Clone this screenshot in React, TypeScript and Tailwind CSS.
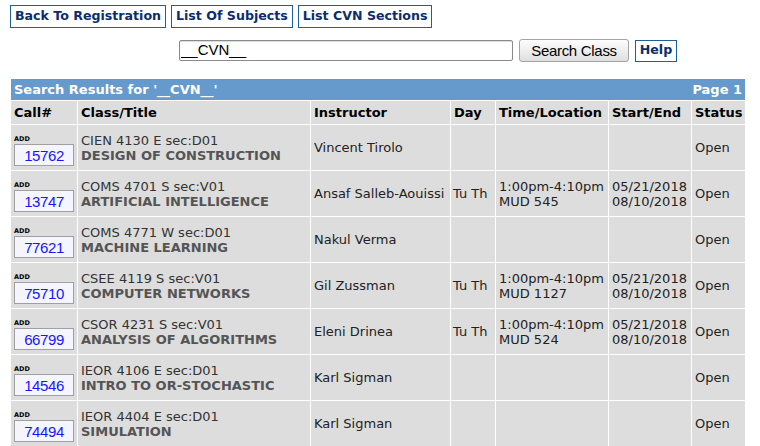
import React from "react"

type Row = {
  call: string
  course: string
  title: string
  instructor: string
  day?: string
  time?: string
  room?: string
  start?: string
  end?: string
  status: string
}

const rows: Row[] = [
  { call: "15762", course: "CIEN 4130 E sec:D01", title: "DESIGN OF CONSTRUCTION", instructor: "Vincent Tirolo", status: "Open" },
  { call: "13747", course: "COMS 4701 S sec:V01", title: "ARTIFICIAL INTELLIGENCE", instructor: "Ansaf Salleb-Aouissi", day: "Tu Th", time: "1:00pm-4:10pm", room: "MUD 545", start: "05/21/2018", end: "08/10/2018", status: "Open" },
  { call: "77621", course: "COMS 4771 W sec:D01", title: "MACHINE LEARNING", instructor: "Nakul Verma", status: "Open" },
  { call: "75710", course: "CSEE 4119 S sec:V01", title: "COMPUTER NETWORKS", instructor: "Gil Zussman", day: "Tu Th", time: "1:00pm-4:10pm", room: "MUD 1127", start: "05/21/2018", end: "08/10/2018", status: "Open" },
  { call: "66799", course: "CSOR 4231 S sec:V01", title: "ANALYSIS OF ALGORITHMS", instructor: "Eleni Drinea", day: "Tu Th", time: "1:00pm-4:10pm", room: "MUD 524", start: "05/21/2018", end: "08/10/2018", status: "Open" },
  { call: "14546", course: "IEOR 4106 E sec:D01", title: "INTRO TO OR-STOCHASTIC", instructor: "Karl Sigman", status: "Open" },
  { call: "74494", course: "IEOR 4404 E sec:D01", title: "SIMULATION", instructor: "Karl Sigman", status: "Open" },
]

function NavBox({ children }: { children: React.ReactNode }) {
  return (
    <a href="#" className="flex h-[23px] items-center border border-[#1d6197] px-[4px] text-[12.6px] font-bold text-[#0c2d6b]">
      {children}
    </a>
  )
}

export default function App() {
  return (
    <div className="min-h-[446px] bg-white font-['DejaVu_Sans',sans-serif] text-[13px] text-[#222]">
      <div className="flex gap-[5px] pl-[10px] pt-[5px]">
        <NavBox>Back To Registration</NavBox>
        <NavBox>List Of Subjects</NavBox>
        <NavBox>List CVN Sections</NavBox>
      </div>

      <div className="mt-[11px] flex h-[23px] items-center gap-[6px] pl-[179px]">
        <input
          defaultValue="__CVN__"
          className="h-[21px] w-[334px] rounded-[2px] border border-[#8a8a8a] bg-white pl-[1px] font-['Liberation_Sans',sans-serif] text-[15px] text-black shadow-[inset_0_1px_1px_rgba(0,0,0,0.15)] outline-none"
        />
        <button className="h-[23px] w-[110px] rounded-[3px] border border-[#a3a3a3] bg-gradient-to-b from-[#fdfdfd] to-[#dfdfdf] font-['Liberation_Sans',sans-serif] text-[15px] tracking-[-0.3px] text-black">
          Search Class
        </button>
        <a href="#" className="flex h-[22px] w-[42px] items-center justify-center border border-[#1d6197] text-[12.6px] font-bold text-[#0c2d6b]">
          Help
        </a>
      </div>

      <table className="ml-[10px] mt-[16px] w-[736px] table-fixed border-separate border-spacing-[1px]">
        <colgroup>
          <col className="w-[66px]" />
          <col className="w-[232px]" />
          <col className="w-[139px]" />
          <col className="w-[44px]" />
          <col className="w-[112px]" />
          <col className="w-[82px]" />
          <col className="w-[53px]" />
        </colgroup>
        <thead>
          <tr className="h-[21px] bg-[#6699cc] font-bold text-white">
            <td colSpan={7} className="px-[3px]">
              <div className="flex justify-between">
                <span>Search Results for '__CVN__'</span>
                <span>Page 1</span>
              </div>
            </td>
          </tr>
          <tr className="h-[23px] text-left font-bold text-black">
            {["Call#", "Class/Title", "Instructor", "Day", "Time/Location", "Start/End", "Status"].map((h) => (
              <th key={h} className="whitespace-nowrap bg-[#dddddd] px-[3px] text-left align-middle font-bold">
                {h}
              </th>
            ))}
          </tr>
        </thead>
        <tbody>
          {rows.map((r) => (
            <tr key={r.call} className="h-[45px] leading-[15px]">
              <td className="bg-[#dddddd] pl-[3px] pt-[10px] align-top">
                <div className="h-[9px] text-[6.5px] font-bold leading-[9px] text-black">ADD</div>
                <div className="flex h-[22px] w-[60px] items-center justify-center border border-[#a0a0a0] bg-[#f5f5ff] font-['Liberation_Sans',sans-serif] text-[15px] tracking-[-0.4px] text-[#1515ff]">
                  {r.call}
                </div>
              </td>
              <td className="bg-[#dddddd] px-[3px] align-middle">
                <div className="whitespace-nowrap text-[#333]">{r.course}</div>
                <div className="whitespace-nowrap font-bold text-[#555]">{r.title}</div>
              </td>
              <td className="whitespace-nowrap bg-[#dddddd] px-[3px] align-middle">{r.instructor}</td>
              <td className="whitespace-nowrap bg-[#dddddd] px-[2px] align-middle">{r.day}</td>
              <td className="whitespace-nowrap bg-[#dddddd] px-[3px] align-middle">
                {r.time && (
                  <>
                    <div>{r.time}</div>
                    <div>{r.room}</div>
                  </>
                )}
              </td>
              <td className="whitespace-nowrap bg-[#dddddd] px-[3px] align-middle">
                {r.start && (
                  <>
                    <div>{r.start}</div>
                    <div>{r.end}</div>
                  </>
                )}
              </td>
              <td className="bg-[#dddddd] px-[3px] align-middle">{r.status}</td>
            </tr>
          ))}
        </tbody>
      </table>
    </div>
  )
}
